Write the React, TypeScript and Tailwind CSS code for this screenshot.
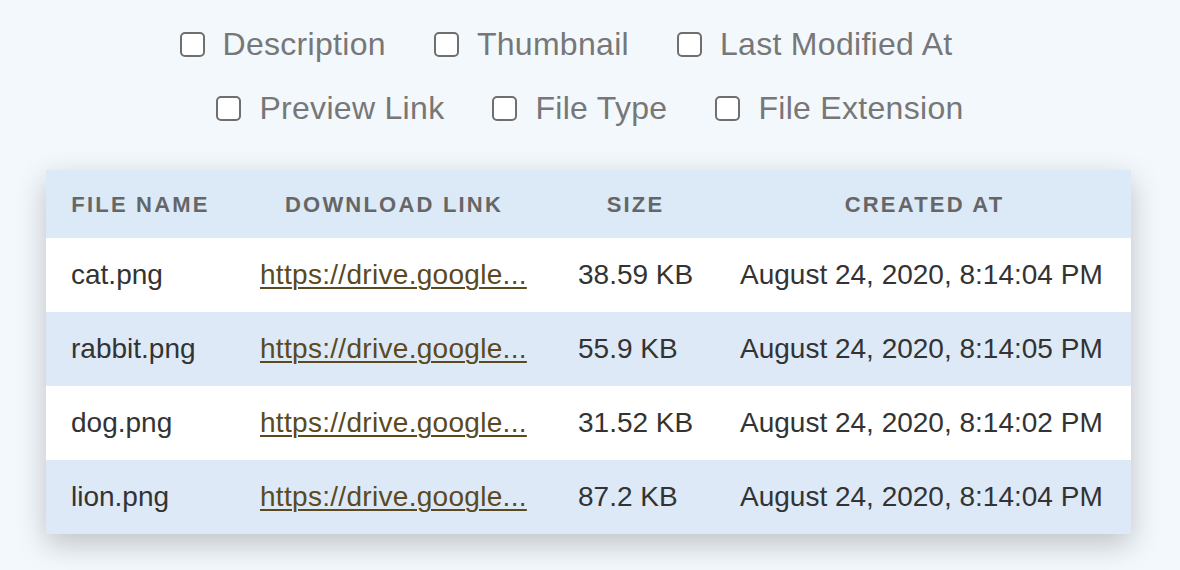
import React from "react";

const rows = [
  { name: "cat.png", size: "38.59 KB", date: "August 24, 2020, 8:14:04 PM" },
  { name: "rabbit.png", size: "55.9 KB", date: "August 24, 2020, 8:14:05 PM" },
  { name: "dog.png", size: "31.52 KB", date: "August 24, 2020, 8:14:02 PM" },
  { name: "lion.png", size: "87.2 KB", date: "August 24, 2020, 8:14:04 PM" },
];

function Check({ label }: { label: string }) {
  return (
    <label className="flex items-center gap-[18px]">
      <span className="w-[25px] h-[25px] rounded-[5px] border-[2px] border-[#6f6f6f] bg-white shrink-0" />
      <span className="text-[32px] tracking-[0.3px] text-[#777777] leading-none">{label}</span>
    </label>
  );
}

export default function App() {
  return (
    <div
      className="w-[1180px] h-[570px] bg-[#f3f8fd] overflow-hidden"
      style={{ fontFamily: '"Liberation Sans", Arial, sans-serif' }}
    >
      <div className="flex justify-center gap-[48px] pr-[48px] pt-[28px] h-[32px] box-content">
        <Check label="Description" />
        <Check label="Thumbnail" />
        <Check label="Last Modified At" />
      </div>
      <div className="flex justify-center gap-[48px] pt-[32px] h-[32px] box-content">
        <Check label="Preview Link" />
        <Check label="File Type" />
        <Check label="File Extension" />
      </div>
      <div className="flex pl-[46px] pt-[46px]">
        <table className="table-fixed w-[1085px] border-collapse shadow-[0_10px_28px_rgba(0,0,0,0.22)]">
          <thead>
            <tr className="bg-[#dce9f7] h-[68px]">
              <th className="w-[189px] text-center text-[22px] font-bold tracking-[2.2px] text-[#666666]">FILE NAME</th>
              <th className="w-[318px] text-center text-[22px] font-bold tracking-[2.2px] text-[#666666]">DOWNLOAD LINK</th>
              <th className="w-[165px] text-center text-[22px] font-bold tracking-[2.2px] text-[#666666]">SIZE</th>
              <th className="w-[413px] text-center text-[22px] font-bold tracking-[2.2px] text-[#666666]">CREATED AT</th>
            </tr>
          </thead>
          <tbody>
            {rows.map((r, i) => (
              <tr key={r.name} className={i % 2 === 0 ? "bg-white h-[74px]" : "bg-[#dde9f7] h-[74px]"}>
                <td className="pl-[25px] text-[28px] text-[#333333] whitespace-nowrap">{r.name}</td>
                <td className="pl-[25px] text-[28px] whitespace-nowrap">
                  <a href="#" className="text-[#5a4a1e] underline decoration-[2px] underline-offset-[3px] tracking-[0.3px]">https://drive.google...</a>
                </td>
                <td className="pl-[25px] text-[28px] text-[#333333] whitespace-nowrap">{r.size}</td>
                <td className="pl-[22px] text-[28px] text-[#333333] whitespace-nowrap">{r.date}</td>
              </tr>
            ))}
          </tbody>
        </table>
      </div>
    </div>
  );
}
